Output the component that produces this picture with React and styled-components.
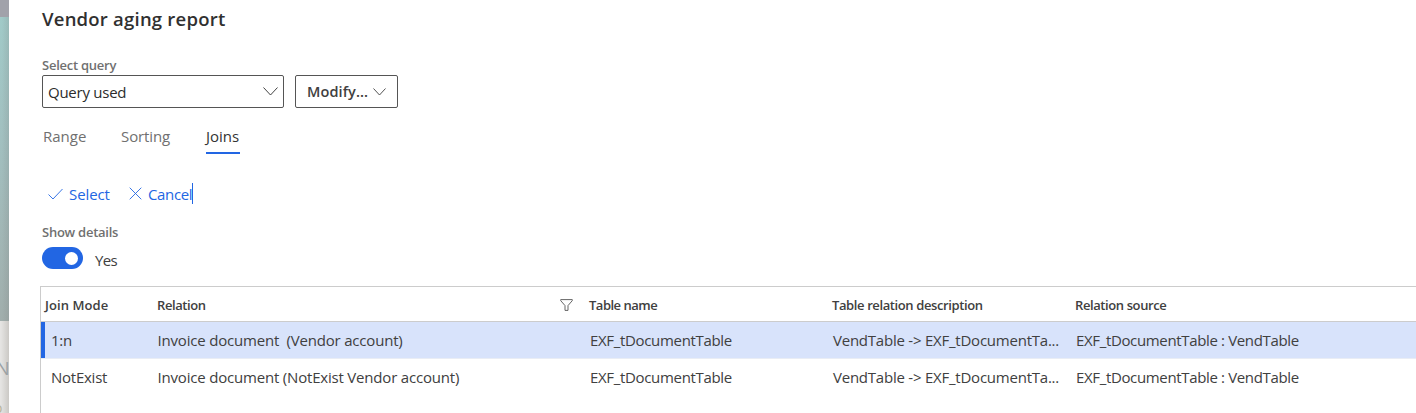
import React from 'react';
import styled, { createGlobalStyle } from 'styled-components';

const GlobalStyle = createGlobalStyle`
  * { box-sizing: border-box; }
  body { margin: 0; background: #fff; overflow: hidden; }
`;

const Page = styled.div`
  display: flex;
  width: 1416px;
  height: 413px;
  overflow: hidden;
  font-family: 'Open Sans', 'Noto Sans', sans-serif;
  font-size: 15px;
  color: #404040;
`;

const Backdrop = styled.aside`
  display: flex;
  flex-direction: column;
  flex: none;
  width: 9px;
  overflow: hidden;
`;
const BackdropBar = styled.div`
  flex: none;
  height: 17px;
  background: #a1a2aa;
`;
const BackdropImage = styled.div`
  flex: none;
  height: 304px;
  background: linear-gradient(90deg, transparent 20%, rgba(120, 120, 120, 0.2)),
    linear-gradient(#a1cac8, #a2c0c0 40%, #a1aeac);
`;
const BackdropPage = styled.div`
  flex: none;
  height: 92px;
  padding-top: 34px;
  background: linear-gradient(90deg, #e5e4e2 10%, #cbc9c5);
`;
const Clipped = styled.div`
  height: ${(p) => p.$h}px;
  font-size: ${(p) => p.$size}px;
  line-height: 26px;
  text-indent: ${(p) => p.$shift}px;
  white-space: nowrap;
  color: ${(p) => p.$color};
`;

const Panel = styled.main`
  flex: 1;
  min-width: 0;
  display: flex;
  flex-direction: column;
  padding: 7px 0 0 31px;
`;
const Text = styled.span`
  white-space: pre;
  letter-spacing: ${(p) => p.$ls || 0}px;
`;
const Title = styled.h1`
  margin: 0 0 0 2px;
  height: 50px;
  font-size: 18.5px;
  line-height: 23px;
  font-weight: 600;
  color: #303030;
`;
const FieldLabel = styled.div`
  margin-left: 2px;
  height: 18px;
  line-height: 17px;
  font-size: 13px;
  font-weight: 600;
  color: #707070;
`;
const QueryRow = styled.div`
  display: flex;
  gap: 11px;
  margin-left: 2px;
  height: 33px;
`;
const SelectBox = styled.div`
  display: flex;
  align-items: center;
  justify-content: space-between;
  width: 242px;
  padding: 0 5px;
  border: 1px solid #555;
  border-radius: 2px;
  color: #2c2c2c;
`;
const ModifyButton = styled.button`
  display: flex;
  align-items: center;
  justify-content: space-between;
  width: 103px;
  padding: 0 11px;
  border: 1px solid #555;
  border-radius: 2px;
  background: #fff;
  font: 600 14.5px 'Open Sans', 'Noto Sans', sans-serif;
  color: #404040;
`;
const Icon = styled.svg`
  flex: none;
  display: block;
  fill: none;
  stroke: currentColor;
  stroke-width: 0.9;
`;
const Tabs = styled.nav`
  display: flex;
  gap: 35px;
  margin: 18px 0 0 3px;
  height: 28px;
`;
const Tab = styled.div`
  width: ${(p) => p.$w}px;
  height: 28px;
  line-height: 20px;
  color: ${(p) => (p.$active ? '#333' : '#707070')};
  border-bottom: 2px solid ${(p) => (p.$active ? '#2266e3' : 'transparent')};
`;
const Actions = styled.div`
  display: flex;
  margin: 29px 0 0 8px;
  height: 21px;
  color: #2266e3;
`;
const Action = styled.div`
  display: flex;
  align-items: center;
  gap: ${(p) => p.$gap}px;
  width: ${(p) => p.$w}px;
  height: 21px;
  border-right: ${(p) => (p.$caret ? '1px solid #2266e3' : '0')};
`;
const DetailsLabel = styled(FieldLabel)`
  margin-top: 20px;
  height: 23px;
`;
const ToggleRow = styled.div`
  display: flex;
  gap: 12px;
  margin-left: 2px;
  height: 39px;
  line-height: 27px;
`;
const Toggle = styled.div`
  display: flex;
  align-items: center;
  justify-content: flex-end;
  width: 41px;
  height: 22px;
  padding-right: 5px;
  border-radius: 11px;
  background: #2266e3;
`;
const Knob = styled.div`
  width: 13px;
  height: 13px;
  border-radius: 50%;
  background: #fff;
`;

const Grid = styled.section`
  flex: 1;
  border-top: 1px solid #ccc;
  border-left: 1px solid #ccc;
`;
const Row = styled.div`
  display: grid;
  grid-template-columns: 111px 432px 243px 243px 1fr;
  align-items: center;
  height: 37px;
  padding-left: 5px;
  background: ${(p) => (p.$selected ? '#d8e3fb' : '#fff')};
  box-shadow: ${(p) => (p.$selected ? 'inset 4px 0 #2266e3' : 'none')};
  border-bottom: 1px solid ${(p) => (p.$selected ? '#e9edf5' : 'transparent')};
`;
const HeaderRow = styled(Row)`
  height: 35px;
  padding: 2px 0 0 4px;
  border-bottom: 1px solid #ccc;
  font-size: 13px;
  font-weight: 600;
  color: #404040;
`;
const Cell = styled.div`
  display: flex;
  align-items: center;
  justify-content: space-between;
  padding-left: ${(p) => p.$pad || 0}px;
  padding-right: 16px;
`;
const FilterIcon = styled(Icon)`
  margin: -1px -1px 0 0;
  color: #555;
`;

const Chevron = ({ w, h }) => (
  <Icon width={w} height={h} viewBox={`0 0 ${w} ${h}`}>
    <path d={`M.5 .5L${w / 2} ${h - 1}L${w - 0.5} .5`} />
  </Icon>
);

const rows = [
  { mode: '1:n', relation: 'Invoice document  (Vendor account)', selected: true },
  { mode: 'NotExist', relation: 'Invoice document (NotExist Vendor account)' },
];

export default function App() {
  return (
    <Page>
      <GlobalStyle />
      <Backdrop>
        <BackdropBar />
        <BackdropImage />
        <BackdropPage>
          <Clipped $h={40} $size={18} $shift={-4} $color="#9aa1a4">N</Clipped>
          <Clipped $h={18} $size={14} $shift={-6} $color="#b9b49c">o</Clipped>
        </BackdropPage>
      </Backdrop>
      <Panel>
        <Title><Text $ls={0.22}>Vendor aging report</Text></Title>
        <FieldLabel><Text $ls={-0.25}>Select query</Text></FieldLabel>
        <QueryRow>
          <SelectBox><Text $ls={-0.25}>Query used</Text><Chevron w={15} h={9} /></SelectBox>
          <ModifyButton><Text $ls={0.1}>Modify...</Text><Chevron w={13} h={8} /></ModifyButton>
        </QueryRow>
        <Tabs>
          <Tab $w={43}><Text>Range</Text></Tab>
          <Tab $w={50}><Text $ls={-0.1}>Sorting</Text></Tab>
          <Tab $w={34} $active><Text>Joins</Text></Tab>
        </Tabs>
        <Actions>
          <Action $w={81} $gap={6}>
            <Icon width="15" height="12" viewBox="0 0 15 12"><path d="M.5 6.5L5 11L14.5 1" /></Icon>
            <Text $ls={-0.1}>Select</Text>
          </Action>
          <Action $w={64} $gap={6} $caret>
            <Icon width="13" height="13" viewBox="0 0 13 13"><path d="M.7 .7L12.3 12.3M12.3 .7L.7 12.3" /></Icon>
            <Text $ls={-0.35}>Cancel</Text>
          </Action>
        </Actions>
        <DetailsLabel><Text $ls={-0.25}>Show details</Text></DetailsLabel>
        <ToggleRow>
          <Toggle><Knob /></Toggle>
          <Text $ls={-0.6}>Yes</Text>
        </ToggleRow>
        <Grid>
          <HeaderRow>
            <Cell><Text $ls={0.08}>Join Mode</Text></Cell>
            <Cell $pad={1}>
              <Text $ls={-0.4}>Relation</Text>
              <FilterIcon width="13" height="12" viewBox="0 0 13 12"><path d="M.7 .6H12.3V1.6L8 6.6V11.4H5V6.6L.7 1.6Z" /></FilterIcon>
            </Cell>
            <Cell $pad={1}><Text $ls={-0.5}>Table name</Text></Cell>
            <Cell $pad={1}><Text $ls={-0.39}>Table relation description</Text></Cell>
            <Cell $pad={1}><Text $ls={-0.4}>Relation source</Text></Cell>
          </HeaderRow>
          {rows.map((r) => (
            <Row key={r.mode} $selected={r.selected}>
              <Cell $pad={5}><Text $ls={-0.25}>{r.mode}</Text></Cell>
              <Cell $pad={0.5}><Text $ls={-0.19}>{r.relation}</Text></Cell>
              <Cell $pad={1}><Text $ls={-0.33}>EXF_tDocumentTable</Text></Cell>
              <Cell $pad={1}><Text $ls={-0.23}>{'VendTable -> EXF_tDocumentTa...'}</Text></Cell>
              <Cell $pad={1}><Text $ls={-0.35}>EXF_tDocumentTable : VendTable</Text></Cell>
            </Row>
          ))}
        </Grid>
      </Panel>
    </Page>
  );
}
